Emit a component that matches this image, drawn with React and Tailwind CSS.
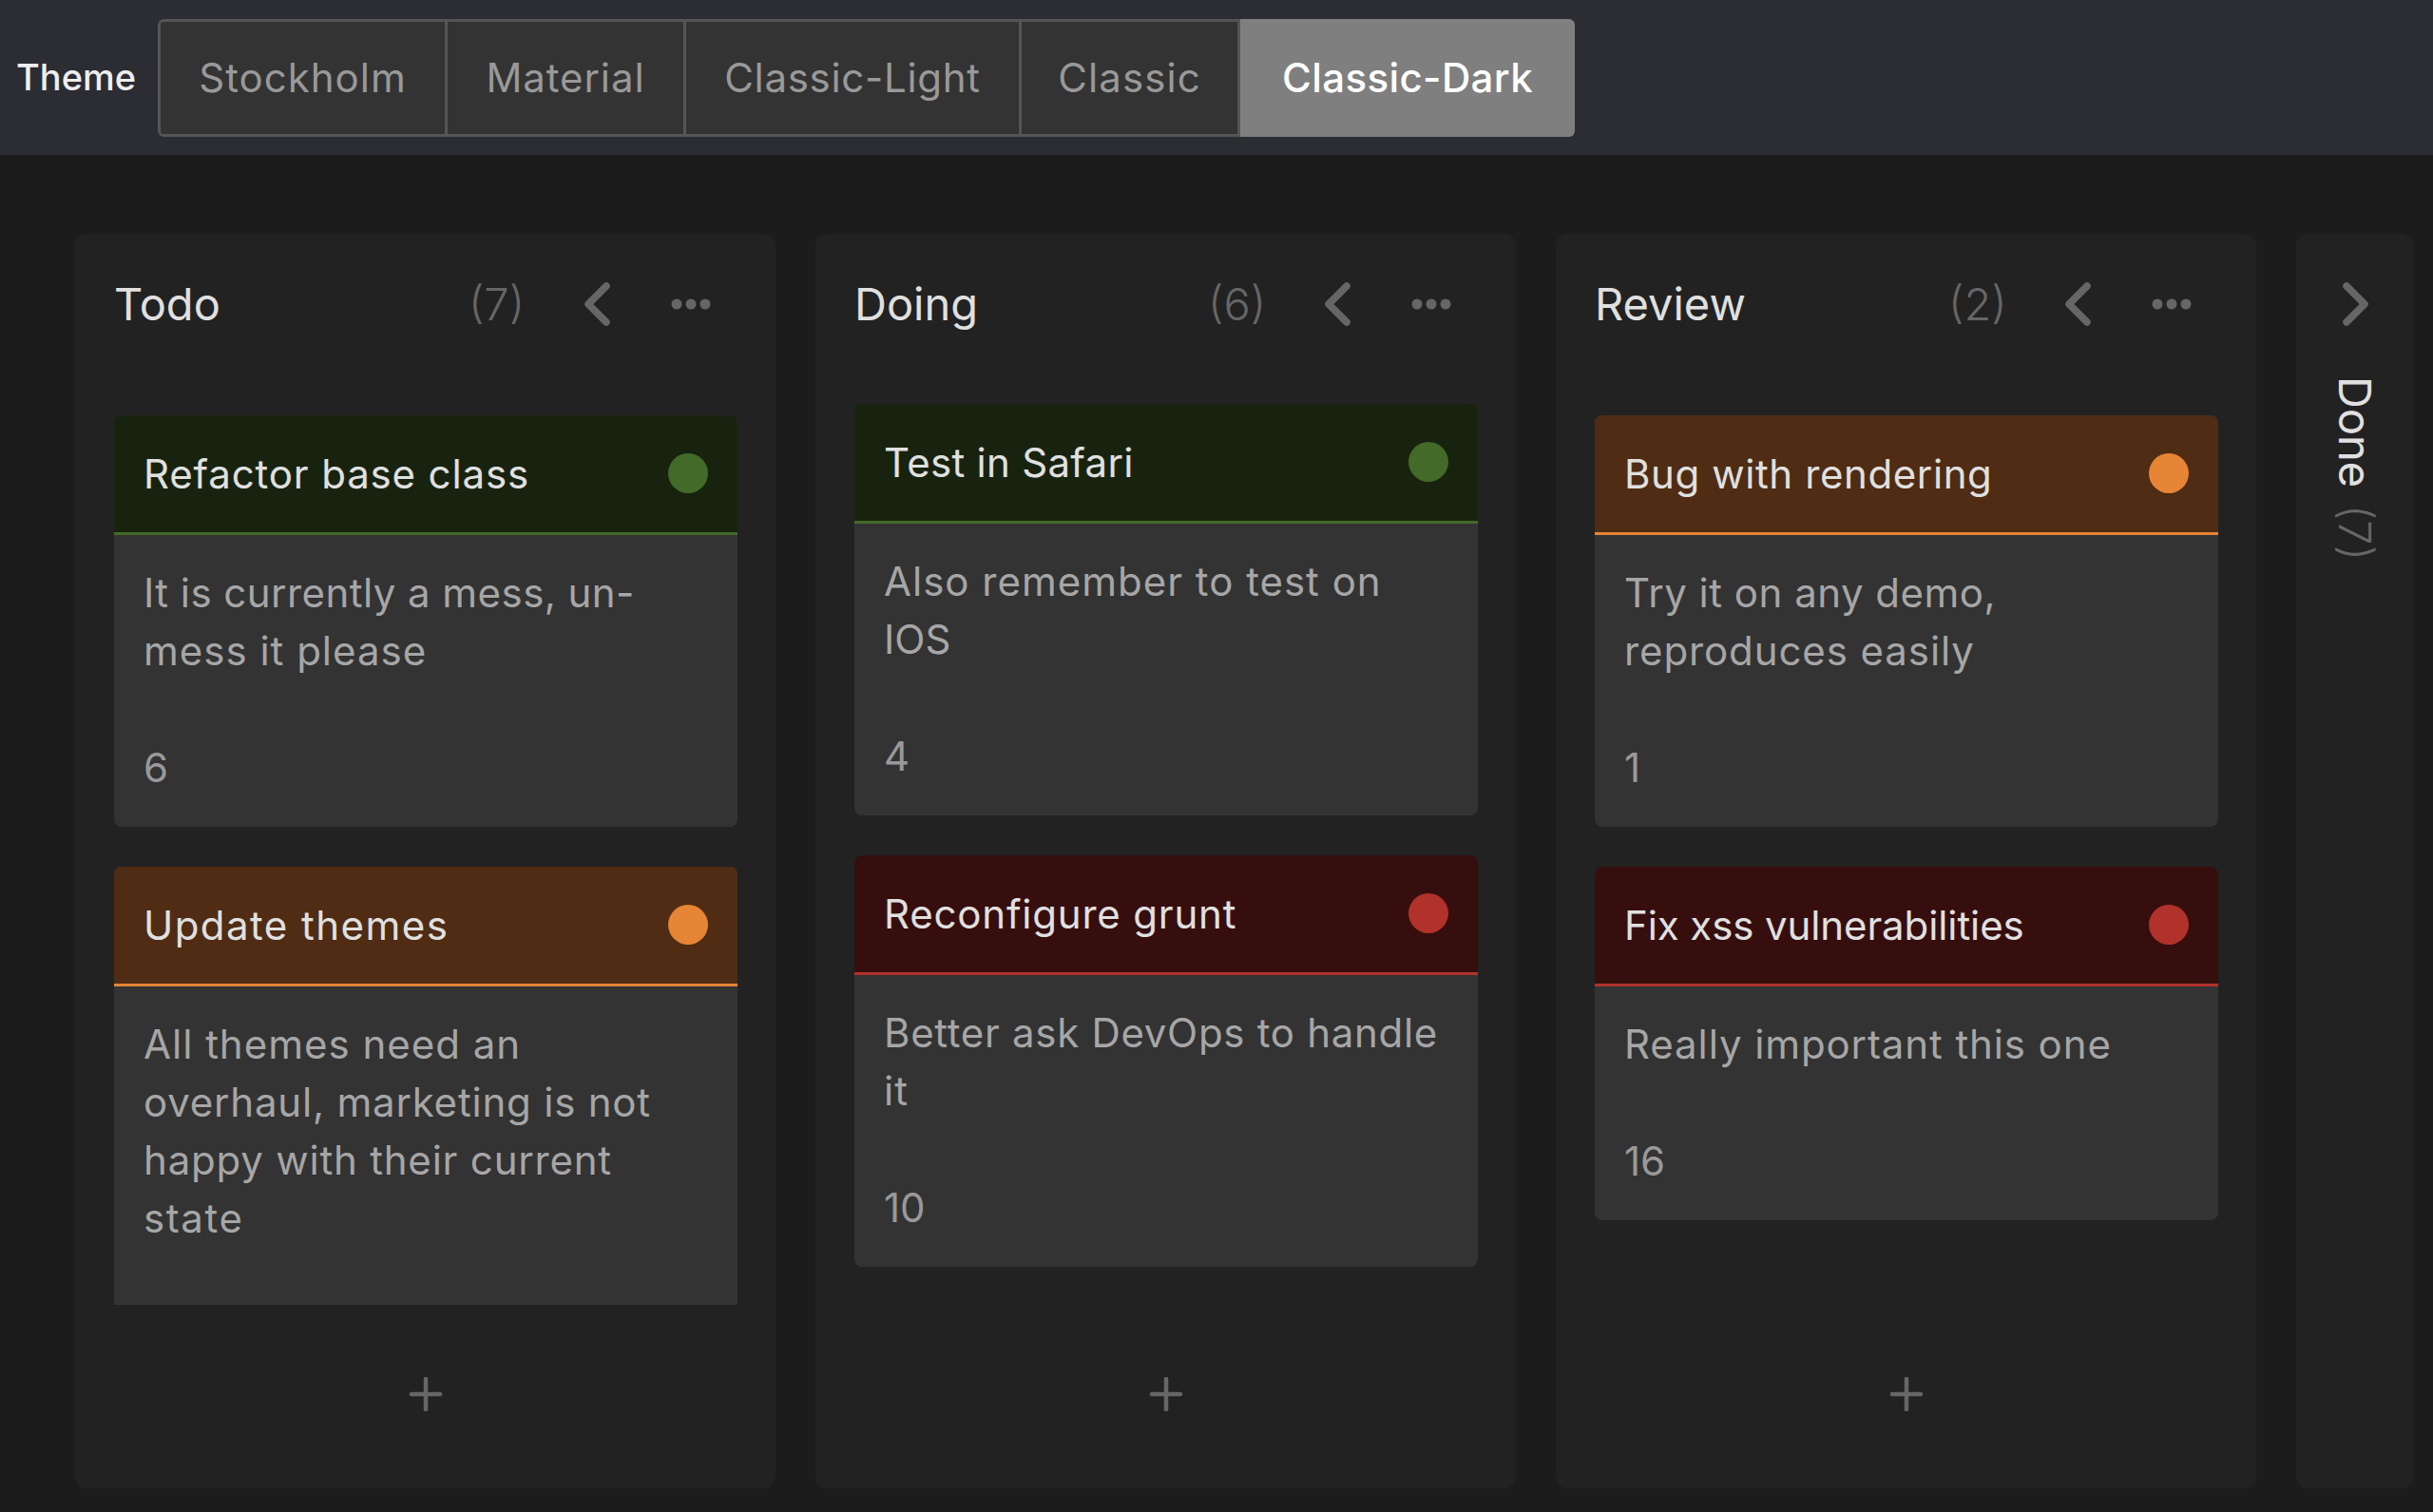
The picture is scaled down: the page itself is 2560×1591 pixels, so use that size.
const FONT = "font-['Inter','Liberation_Sans',sans-serif]";

const TONES = {
  green: { head: "bg-[#18230f]", line: "border-[#436a28]", dot: "bg-[#436a28]" },
  orange: { head: "bg-[#4f2c13]", line: "border-[#e68535]", dot: "bg-[#e68535]" },
  red: { head: "bg-[#360e0e]", line: "border-[#b0322a]", dot: "bg-[#b0322a]" },
};

const COLUMNS = [
  {
    title: "Todo",
    count: 7,
    list: "pt-[12px]",
    cards: [
      { title: "Refactor base class", tt: "tracking-[0.85px]", tone: "green", lines: [["It is currently a mess, un-", "tracking-[0.45px]"], ["mess it please", "tracking-[1px]"]], n: 6 },
      { title: "Update themes", tt: "tracking-[1.45px]", tone: "orange", lines: [["All themes need an", "tracking-[1px]"], ["overhaul, marketing is not", "tracking-[0.8px]"], ["happy with their current", "tracking-[0.8px]"], ["state", "tracking-[1.6px]"]], n: null },
    ],
  },
  {
    title: "Doing",
    count: 6,
    list: "pt-0",
    cards: [
      { title: "Test in Safari", tt: "tracking-[0.3px]", tone: "green", lines: [["Also remember to test on", "tracking-[1px]"], ["IOS", "tracking-[0px]"]], n: 4 },
      { title: "Reconfigure grunt", tt: "tracking-[0.8px]", tone: "red", lines: [["Better ask DevOps to handle", "tracking-[0.7px]"], ["it", "tracking-[1px]"]], n: 10 },
    ],
  },
  {
    title: "Review",
    count: 2,
    list: "pt-[12px]",
    cards: [
      { title: "Bug with rendering", tt: "tracking-[0.6px]", tone: "orange", lines: [["Try it on any demo,", "tracking-[0.5px]"], ["reproduces easily", "tracking-[0.9px]"]], n: 1 },
      { title: "Fix xss vulnerabilities", tt: "tracking-[-0.1px]", tone: "red", lines: [["Really important this one", "tracking-[0.9px]"]], n: 16 },
    ],
  },
];

const TABS = [
  ["Stockholm", "w-[305px] border-l-[3px] rounded-l-[6px] tracking-[1px]"],
  ["Material", "w-[251px] tracking-[0.9px]"],
  ["Classic-Light", "w-[353px] tracking-[0.7px]"],
  ["Classic", "w-[230px] tracking-[1.1px]"],
];

function Chevron({ right }) {
  return (
    <svg width="30" height="48" viewBox="0 0 30 48" fill="none" className="shrink-0">
      <path
        d={right ? "M5 5 L24 24 L5 43" : "M25 5 L6 24 L25 43"}
        stroke="#666666"
        strokeWidth="7.5"
        strokeLinecap="round"
        strokeLinejoin="round"
      />
    </svg>
  );
}

function Dots() {
  return (
    <svg width="42" height="12" viewBox="0 0 42 12" className="shrink-0">
      <circle cx="6" cy="6" r="5.5" fill="#666666" />
      <circle cx="21" cy="6" r="5.5" fill="#666666" />
      <circle cx="36" cy="6" r="5.5" fill="#666666" />
    </svg>
  );
}

function Plus() {
  return (
    <svg width="36" height="36" viewBox="0 0 36 36" fill="none">
      <path d="M18 2 V34 M3 18 H33" stroke="#666666" strokeWidth="4.5" strokeLinecap="round" />
    </svg>
  );
}

function Card({ card }) {
  const t = TONES[card.tone];
  return (
    <div className="w-full shrink-0 rounded-[8px] overflow-hidden bg-[#333333]">
      <div className={`flex items-center justify-between h-[126px] pb-[1px] pl-[31px] pr-[31px] border-b-[3px] ${t.head} ${t.line}`}>
        <span className={`text-[42px] leading-[61px] text-[#e0e0e0] ${card.tt}`}>{card.title}</span>
        <span className={`w-[42px] h-[42px] rounded-full ${t.dot}`} />
      </div>
      <div className="pt-[30px] pb-[32px] pl-[31px] pr-[30px]">
        <div className="text-[42px] leading-[61px] text-[#a6a6a6]">
          {card.lines.map(([l, tr]) => (
            <div key={l} className={`whitespace-nowrap ${tr}`}>{l}</div>
          ))}
        </div>
        <div className="mt-[62px] h-[61px] text-[42px] leading-[61px] text-[#999999]">{card.n}</div>
      </div>
    </div>
  );
}

function Column({ col }) {
  return (
    <section className="w-[737px] h-[1320px] shrink-0 flex flex-col rounded-[12px] bg-[#222222]">
      <header className="flex items-center h-[179px] pb-[31px] pl-[41px] pr-[68px] shrink-0">
        <h2 className="flex-1 text-[47px] leading-[68px] font-normal text-[#e0e0e0]">{col.title}</h2>
        <span className="w-[60px] text-right text-[47px] leading-[68px] font-light text-[#666666]">({col.count})</span>
        <span className="ml-[61px] mr-[63px]"><Chevron /></span>
        <Dots />
      </header>
      <div className={`flex-1 min-h-0 overflow-hidden flex flex-col gap-[42px] pl-[41px] pr-[40px] ${col.list}`}>
        {col.cards.map((c) => <Card key={c.title} card={c} />)}
      </div>
      <div className="h-[193px] pb-[6px] shrink-0 flex items-center justify-center"><Plus /></div>
    </section>
  );
}

function DoneColumn() {
  return (
    <section className="w-[123px] h-[1320px] shrink-0 flex flex-col items-center rounded-[12px] bg-[#222222] pt-[50px]">
      <span className="ml-[2px]"><Chevron right /></span>
      <div className="mt-[52px] flex items-center gap-[18px] [writing-mode:vertical-rl]">
        <span className="text-[47px] leading-[50px] font-normal text-[#e0e0e0]">Done</span>
        <span className="text-[47px] leading-[50px] font-light text-[#666666]">(7)</span>
      </div>
    </section>
  );
}

export default function App() {
  return (
    <div className={`w-[2560px] h-[1591px] overflow-hidden flex flex-col bg-[#1c1c1c] ${FONT}`}>
      <div className="h-[163px] shrink-0 flex items-center bg-[#2c2c33]">
        <span className="ml-[17px] w-[149px] text-[38px] font-medium text-[#eeeeee]">Theme</span>
        <div className="flex h-[124px] rounded-[6px] overflow-hidden">
          {TABS.map(([t, cls]) => (
            <div
              key={t}
              className={`flex items-center justify-center bg-[#333333] border-y-[3px] border-r-[3px] border-[#555555] text-[42px] text-[#999999] ${cls}`}
            >
              {t}
            </div>
          ))}
          <div className="flex items-center justify-center w-[352px] bg-[#7f7f7f] text-[42px] font-medium tracking-[0.4px] text-[#ffffff]">Classic-Dark</div>
        </div>
      </div>
      <main className="flex gap-[42px] pl-[79px] pt-[83px]">
        {COLUMNS.map((c) => <Column key={c.title} col={c} />)}
        <DoneColumn />
      </main>
    </div>
  );
}
